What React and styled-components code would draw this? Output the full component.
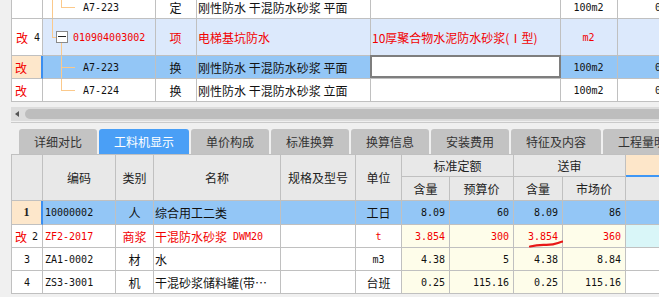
import React from "react";
import styled, { createGlobalStyle } from "styled-components";

const CJK = `"Noto Sans CJK SC", "Noto Sans", sans-serif`;
const MONO = `"DejaVu Sans Mono", "Liberation Mono", monospace`;
const GRID = "#c0c0c0";
const RED = "#f20000";
const SEL_BLUE = "#93c6f6";
const ROW_BLUE = "#dce9fc";
const ORANGE = "#fde7cb";
const MARK = "#3b8ef0";
const YELLOW = "#fefdea";
const CYAN = "#d9f6f8";
const TREE = "#fbc98b";

const GlobalStyle = createGlobalStyle`
  html, body { margin: 0; padding: 0; background: #f0f0f0; }
  body { font-family: ${CJK}; font-size: 12px; color: #111; }
  * { box-sizing: border-box; }
`;

const Page = styled.div`
  width: 659px;
  height: 297px;
  overflow: hidden;
  background: #f0f0f0;
  display: flex;
  flex-direction: column;
  padding-left: 11px;
`;

/* ---------- shared cell ---------- */
const Cell = styled.div`
  position: relative;
  border-right: 1px solid ${GRID};
  border-bottom: 1px solid ${GRID};
  display: flex;
  align-items: center;
  justify-content: ${(p) =>
    p.$align === "right" ? "flex-end" : p.$align === "center" ? "center" : "flex-start"};
  padding: 0 ${(p) => p.$pr ?? 3}px 0 ${(p) => p.$pl ?? 2}px;
  background: ${(p) => p.$bg || "transparent"};
  color: ${(p) => (p.$red ? RED : "#111")};
  font-family: ${(p) => (p.$mono ? MONO : CJK)};
  font-size: ${(p) => (p.$mono ? "10px" : "12px")};
  white-space: nowrap;
  overflow: ${(p) => (p.$visible ? "visible" : "hidden")};
  ${(p) => (p.$mark ? `border-right: 2px solid ${MARK};` : "")}
`;

const Mono = styled.span`
  font-family: ${MONO};
  font-size: 10px;
  margin-left: ${(p) => p.$gap ?? 0}px;
`;

const Bold1 = styled.span`
  font-family: "Liberation Serif", serif;
  font-weight: bold;
  font-size: 12px;
  color: #222;
`;

const RedMark = styled.span`
  color: ${RED};
`;

/* ---------- top table ---------- */
const TOP_COLS = "31px 113px 41px 174px 190px 57px 80px";

const TopViewport = styled.div`
  flex: none;
  height: 102px;
  overflow: hidden;
`;

const TopBody = styled.div`
  margin-top: -4px;
  border-left: 1px solid ${GRID};
  width: max-content;
`;

const TopRow = styled.div`
  display: grid;
  grid-template-columns: ${TOP_COLS};
  height: ${(p) => p.$h}px;
  background: ${(p) => p.$bg || "#fff"};
`;

const EditCell = styled(Cell)`
  background: #fff;
  box-shadow: inset 0 0 0 2px #7e7e7e;
  margin-left: -1px;
  margin-top: -1px;
  border-right: none;
`;

const TreeLine = styled.span`
  position: absolute;
  background: ${TREE};
`;

const Toggle = styled.span`
  position: absolute;
  left: 13px;
  top: 12px;
  width: 12px;
  height: 12px;
  border: 1px solid #8a8a8a;
  background: #fff;
  &::after {
    content: "";
    position: absolute;
    left: 1px;
    right: 1px;
    top: 4px;
    height: 1px;
    background: #222;
  }
`;

function Tree({ lines, toggle }) {
  return (
    <>
      {lines.map(([x, y, w, h], i) => (
        <TreeLine key={i} style={{ left: x, top: y, width: w, height: h }} />
      ))}
      {toggle && <Toggle />}
    </>
  );
}

/* ---------- scroll bar ---------- */
const ScrollArea = styled.div`
  flex: none;
  height: 20px;
  padding-top: 5px;
`;

const Track = styled.div`
  height: 14px;
  background: #dcdcdc;
  display: flex;
  align-items: center;
  padding-left: 4px;
  gap: 6px;
`;

const Arrow = styled.span`
  width: 0;
  height: 0;
  border-top: 3.5px solid transparent;
  border-bottom: 3.5px solid transparent;
  border-right: 4px solid #555;
`;

const Thumb = styled.div`
  flex: 1;
  height: 10px;
  border-radius: 5px 0 0 5px;
  background: #bdbdbd;
`;

/* ---------- tabs ---------- */
const TabBar = styled.div`
  flex: none;
  height: 32px;
  border-top: 1px solid #cacaca;
  padding: 6px 0 0 8px;
  display: flex;
  gap: 2px;
`;

const Tab = styled.div`
  flex: none;
  height: 25px;
  padding: 0 15px;
  display: flex;
  align-items: center;
  border-radius: 3px 3px 0 0;
  background: ${(p) => (p.$active ? "#4a9ff6" : "#c3c3c3")};
  color: ${(p) => (p.$active ? "#fff" : "#333")};
  font-family: ${CJK};
  font-size: 12px;
  white-space: nowrap;
`;

/* ---------- bottom table ---------- */
const BOT_COLS = "31px 73px 38px 127px 75px 46px 48px 64px 49px 63px 60px";

const HeadGrid = styled.div`
  flex: none;
  display: grid;
  grid-template-columns: ${BOT_COLS};
  grid-template-rows: 22px 24px;
  border-left: 1px solid ${GRID};
  border-top: 1px solid ${GRID};
  background: #e8e8e8;
  width: max-content;
  color: #222;
`;

const HCell = styled(Cell)`
  grid-row: span ${(p) => p.$rs || 1};
  grid-column: span ${(p) => p.$cs || 1};
  justify-content: center;
  padding: 0;
  color: #222;
`;

const SortHead = styled(HCell)`
  background: #fde6c9;
  border-bottom: 2px solid #3f97f5;
`;

const BodyRow = styled.div`
  flex: none;
  display: grid;
  grid-template-columns: ${BOT_COLS};
  height: ${(p) => p.$h}px;
  border-left: 1px solid ${GRID};
  width: max-content;
  background: ${(p) => p.$bg || "#fff"};
`;

const Underline = styled.svg`
  position: absolute;
  left: 14px;
  top: 12px;
  overflow: visible;
`;

const tabs = ["详细对比", "工料机显示", "单价构成", "标准换算", "换算信息", "安装费用", "特征及内容", "工程量明细"];

const bodyRows = [
  { no: <Bold1>1</Bold1>, noBg: ORANGE, mark: true, bg: SEL_BLUE, code: "10000002", type: "人", name: "综合用工二类", unit: "工日", v: ["8.09", "60", "8.09", "86"], h: 24 },
  { no: (<><RedMark>改</RedMark><Mono $gap={5}>2</Mono></>), left: true, red: true, code: "ZF2-2017", type: "商浆", name: (<><span>干混防水砂浆</span><Mono $gap={6}>DWM20</Mono></>), unit: "t", unitMono: true, v: ["3.854", "300", "3.854", "360"], yellow: true, lastBg: CYAN, underline: true, h: 23 },
  { no: <Mono>3</Mono>, code: "ZA1-0002", type: "材", name: "水", unit: "m3", unitMono: true, v: ["4.38", "5", "4.38", "8.84"], yellow: true, h: 23 },
  { no: <Mono>4</Mono>, code: "ZS3-3001", type: "机", name: "干混砂浆储料罐(带…", unit: "台班", v: ["0.25", "115.16", "0.25", "115.16"], yellow: true, h: 23 },
];

export default function App() {
  return (
    <>
      <GlobalStyle />
      <Page>
        <TopViewport>
          <TopBody>
            <TopRow $h={23}>
              <Cell />
              <Cell $pl={40} $mono>
                <Tree lines={[[9, 0, 1, 23], [18, 0, 1, 11], [18, 11, 14, 1]]} />
                A7-223
              </Cell>
              <Cell $align="center">定</Cell>
              <Cell $pl={1}>刚性防水 干混防水砂浆 平面</Cell>
              <Cell />
              <Cell $align="center" $mono>100m2</Cell>
              <Cell $pl={37} $mono>0.4</Cell>
            </TopRow>
            <TopRow $h={37} $bg={ROW_BLUE}>
              <Cell $pl={4} $bg="#fff">
                <RedMark>改</RedMark>
                <Mono $gap={6}>4</Mono>
              </Cell>
              <Cell $pl={30} $mono $red>
                <Tree toggle lines={[[9, 0, 1, 18], [9, 18, 4, 1], [18, 24, 1, 14]]} />
                010904003002
              </Cell>
              <Cell $align="center" $red>项</Cell>
              <Cell $pl={1} $red>电梯基坑防水</Cell>
              <Cell $pl={1} $red>10厚聚合物水泥防水砂浆(Ⅰ型)</Cell>
              <Cell $align="center" $mono $red>m2</Cell>
              <Cell />
            </TopRow>
            <TopRow $h={23} $bg={SEL_BLUE}>
              <Cell $pl={3} $bg={ORANGE} $red $mark>改</Cell>
              <Cell $pl={40} $mono>
                <Tree lines={[[18, 0, 1, 23], [18, 11, 14, 1]]} />
                A7-223
              </Cell>
              <Cell $align="center">换</Cell>
              <Cell $pl={1}>刚性防水 干混防水砂浆 平面</Cell>
              <EditCell />
              <Cell $align="center" $mono>100m2</Cell>
              <Cell $pl={37} $mono>0.4</Cell>
            </TopRow>
            <TopRow $h={23}>
              <Cell $pl={3} $red>改</Cell>
              <Cell $pl={40} $mono>
                <Tree lines={[[18, 0, 1, 11], [18, 11, 14, 1]]} />
                A7-224
              </Cell>
              <Cell $align="center">换</Cell>
              <Cell $pl={1}>刚性防水 干混防水砂浆 立面</Cell>
              <Cell />
              <Cell $align="center" $mono>100m2</Cell>
              <Cell $pl={37} $mono>0.4</Cell>
            </TopRow>
          </TopBody>
        </TopViewport>

        <ScrollArea>
          <Track>
            <Arrow />
            <Thumb />
          </Track>
        </ScrollArea>

        <TabBar>
          {tabs.map((t) => (
            <Tab key={t} $active={t === "工料机显示"}>{t}</Tab>
          ))}
        </TabBar>

        <HeadGrid>
          <HCell $rs={2} />
          <HCell $rs={2}>编码</HCell>
          <HCell $rs={2}>类别</HCell>
          <HCell $rs={2}>名称</HCell>
          <HCell $rs={2}>规格及型号</HCell>
          <HCell $rs={2}>单位</HCell>
          <HCell $cs={2}>标准定额</HCell>
          <HCell $cs={2}>送审</HCell>
          <SortHead />
          <HCell>含量</HCell>
          <HCell>预算价</HCell>
          <HCell>含量</HCell>
          <HCell>市场价</HCell>
          <HCell />
        </HeadGrid>

        {bodyRows.map((r, i) => (
          <BodyRow key={i} $h={r.h} $bg={r.bg}>
            <Cell
              $align={r.left ? "left" : "center"}
              $pl={r.left ? 3 : 0}
              $pr={0}
              $bg={r.noBg}
              $mark={r.mark}
            >
              {r.no}
            </Cell>
            <Cell $pl={2} $mono $red={r.red}>{r.code}</Cell>
            <Cell $align="center" $pl={0} $pr={0} $red={r.red}>{r.type}</Cell>
            <Cell $pl={1} $red={r.red}>{r.name}</Cell>
            <Cell />
            <Cell $align="center" $pl={0} $pr={0} $mono={r.unitMono} $red={r.red}>{r.unit}</Cell>
            {r.v.map((val, j) => (
              <Cell
                key={j}
                $align="right"
                $pr={4}
                $mono
                $red={r.red}
                $bg={r.yellow ? YELLOW : undefined}
                $visible={r.underline && j === 2}
              >
                {val}
                {r.underline && j === 2 && (
                  <Underline width="40" height="12" viewBox="0 0 40 12">
                    <path
                      d="M2 9.5 Q 9 7.6 17 7.8 T 30 6 T 38 4.6"
                      fill="none"
                      stroke="#e81818"
                      strokeWidth="2.2"
                      strokeLinecap="round"
                    />
                  </Underline>
                )}
              </Cell>
            ))}
            <Cell $bg={r.lastBg} />
          </BodyRow>
        ))}
      </Page>
    </>
  );
}
